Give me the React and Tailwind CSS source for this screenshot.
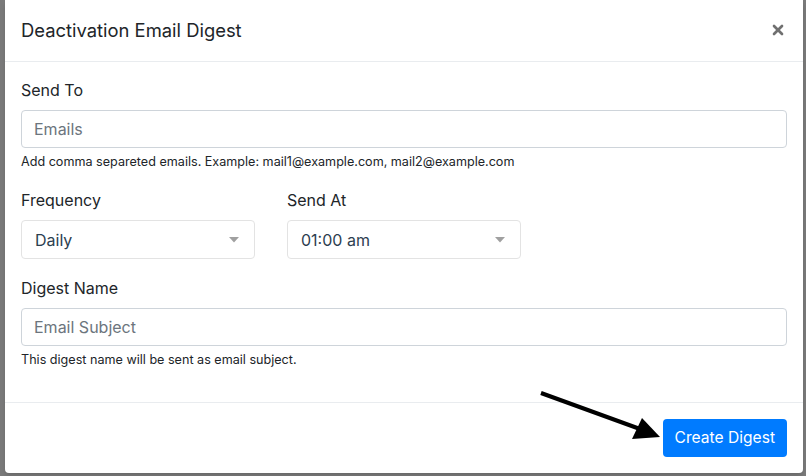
import React from 'react';
import { X } from 'lucide-react';

const Caret = () => (
  <svg width="10" height="6" viewBox="0 0 10 6" className="shrink-0">
    <path d="M0 0 L10 0 L5 5.5 Z" fill="#a0a0a0" />
  </svg>
);

const SelectBox = ({ value }) => (
  <div className="flex h-[39px] w-[234px] items-center justify-between rounded border border-[#e3e3e3] bg-white pl-[13px] pr-[15px]">
    <span className="text-[16px] text-[#2c3e50]">{value}</span>
    <Caret />
  </div>
);

const App = () => {
  return (
    <div
      className="relative h-[476px] w-[806px] overflow-hidden bg-[#7a7a7a]"
      style={{ fontFamily: 'Inter, "Liberation Sans", sans-serif' }}
    >
      <div className="ml-[5px] w-[798px] rounded-b-[4px] bg-white text-[#212529] shadow-md">
        {/* Header */}
        <div className="flex h-[62px] items-center justify-between border-b border-[#e9ecef] px-4 pb-[1px]">
          <h5 className="text-[18.4px] font-normal leading-[30px]">Deactivation Email Digest</h5>
          <X className="mr-[1px] h-[16px] w-[16px] text-[#707070]" strokeWidth={4} />
        </div>

        {/* Body */}
        <div className="px-4 pt-4 pb-4">
          <div className="mb-4">
            <div className="mb-2 text-[16px] leading-6">Send To</div>
            <div className="flex h-[38px] w-full items-center rounded border border-[#ced4da] px-3 text-[16px] text-[#6c757d]">
              Emails
            </div>
            <div className="mt-1 text-[12.6px] leading-[20px]">
              Add comma separeted emails. Example: mail1@example.com, mail2@example.com
            </div>
          </div>

          <div className="mb-[17px] flex gap-8">
            <div>
              <div className="mb-2 text-[16px] leading-6">Frequency</div>
              <SelectBox value="Daily" />
            </div>
            <div>
              <div className="mb-2 text-[16px] leading-6">Send At</div>
              <SelectBox value="01:00 am" />
            </div>
          </div>

          <div className="mb-4">
            <div className="mb-2 text-[16px] leading-6">Digest Name</div>
            <div className="flex h-[38px] w-full items-center rounded border border-[#ced4da] px-3 text-[16px] text-[#6c757d]">
              Email Subject
            </div>
            <div className="mt-1 text-[12.6px] leading-[20px]">
              This digest name will be sent as email subject.
            </div>
          </div>
        </div>

        {/* Footer */}
        <div className="flex h-[71px] items-center justify-end border-t border-[#e9ecef] px-4">
          <button className="h-[38px] rounded bg-[#007bff] px-[12px] text-[15.6px] text-white">
            Create Digest
          </button>
        </div>
      </div>

      {/* Annotation arrow */}
      <svg className="pointer-events-none absolute left-0 top-0" width="806" height="476">
        <line x1="541" y1="393" x2="640" y2="429" stroke="#000" strokeWidth="4" />
        <polygon points="660,437 632,439 642,418" fill="#000" />
      </svg>
    </div>
  );
};

export default App;
